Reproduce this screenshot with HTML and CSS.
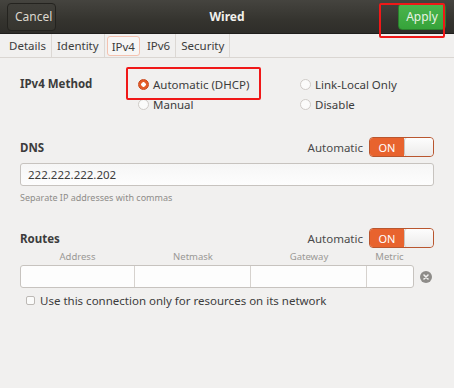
FILE: index.html
```html
<!DOCTYPE html>
<html>
<head>
<meta charset="utf-8">
<link rel="stylesheet" href="styles.css">
</head>
<body>
<div class="win">
  <header class="hb">
    <button class="btn cancel">Cancel</button>
    <div class="title">Wired</div>
    <button class="btn apply">Apply</button>
    <div class="mark mark-apply"></div>
  </header>
  <nav class="tabs">
    <span class="tab">Details</span>
    <span class="tab">Identity</span>
    <span class="tab sel">IPv4</span>
    <span class="tab">IPv6</span>
    <span class="tab">Security</span>
  </nav>
  <main class="content">
    <section class="method">
      <div class="lbl">IPv4 Method</div>
      <div class="radios">
        <label class="radio"><span class="rb on"></span>Automatic (DHCP)</label>
        <label class="radio"><span class="rb"></span>Link-Local Only</label>
        <label class="radio"><span class="rb"></span>Manual</label>
        <label class="radio"><span class="rb"></span>Disable</label>
        <div class="mark mark-dhcp"></div>
      </div>
    </section>

    <section class="sec dns">
      <div class="head">
        <div class="lbl">DNS</div>
        <div class="auto">Automatic</div>
        <div class="switch"><span class="on">ON</span><span class="knob"></span></div>
      </div>
      <div class="entry">222.222.222.202</div>
      <div class="hint">Separate IP addresses with commas</div>
    </section>

    <section class="sec routes">
      <div class="head">
        <div class="lbl">Routes</div>
        <div class="auto">Automatic</div>
        <div class="switch"><span class="on">ON</span><span class="knob"></span></div>
      </div>
      <div class="cols">
        <span class="c1">Address</span><span class="c2">Netmask</span><span class="c3">Gateway</span><span class="c4">Metric</span><span class="c5"></span>
      </div>
      <div class="rowline">
        <div class="fields">
          <span class="f c1"></span><span class="f c2"></span><span class="f c3"></span><span class="f c4"></span>
        </div>
        <span class="clear"><svg width="12" height="12" viewBox="0 0 12 12"><circle cx="6" cy="6" r="6" fill="#8e8c89"/><path d="M4 4L8 8M8 4L4 8" stroke="#f2f1f0" stroke-width="1.6" stroke-linecap="round"/></svg></span>
      </div>
      <label class="check"><span class="cb"></span>Use this connection only for resources on its network</label>
    </section>
  </main>
</div>
</body>
</html>
```
FILE: styles.css
```css
* { box-sizing: border-box; }
html, body { margin: 0; padding: 0; }
body {
  width: 454px;
  height: 388px;
  background: #f1f0ef;
  font-family: "Noto Sans", "Open Sans", sans-serif;
  font-size: 11.5px;
  color: #3c3c3c;
  overflow: hidden;
}
.win { display: flex; flex-direction: column; height: 388px; }

.hb {
  position: relative;
  height: 34px;
  display: flex;
  align-items: center;
  padding: 0 8px 0 7px;
  background: linear-gradient(#45443f, #35342f 60%, #2e2d29);
  border-bottom: 1px solid #1f1e1c;
}
.btn {
  font-family: inherit;
  font-size: 11.5px;
  height: 28px;
  border-radius: 4px;
  padding: 0 7px;
}
.cancel {
  width: 49px;
  color: #dcd8cf;
  background: linear-gradient(#403f3a, #36352f);
  border: 1px solid #24231f;
  font-size: 12px;
}
.title {
  flex: 1;
  text-align: center;
  color: #f1f0ec;
  font-weight: bold;
  font-size: 12px;
}
.apply {
  width: 48px;
  height: 27px;
  color: #e8f3e3;
  background: linear-gradient(#4bb54e, #36a33a);
  border: 1px solid #2a7f2c;
  font-size: 12px;
}
.mark {
  position: absolute;
  border: 2px solid #f01818;
  border-radius: 2px;
  pointer-events: none;
}
.mark-apply { left: 379px; top: 3px; width: 66px; height: 35px; z-index: 2; }

.tabs {
  display: flex;
  height: 24px;
  padding: 0 0 0 4px;
  background: #f1f0ef;
  border-bottom: 1px solid #dad6d2;
  align-items: stretch;
}
.tab {
  display: flex;
  align-items: center;
  padding: 0 5px;
  border-right: 1px solid #dcd8d4;
  color: #3c3c3c;
  font-size: 11.5px;
}
.tab.sel {
  margin: 2px 2px 1px 2px;
  padding: 0 4px;
  border: 1px solid #f4c2b0;
  border-radius: 3px;
  background: #f7f6f5;
}

.content { padding: 0 20px; flex: 1; }
.lbl { font-weight: bold; font-size: 11.5px; color: #3c3c3c; }

.method { display: flex; padding-top: 17px; height: 57px; }
.method .lbl { width: 118px; padding-top: 0; line-height: 18px; }
.radios {
  position: relative;
  display: grid;
  grid-template-columns: 162px auto;
  grid-auto-rows: 20px;
}
.radio { display: flex; align-items: center; gap: 4px; height: 18px; }
.rb {
  width: 11px; height: 11px;
  border-radius: 50%;
  border: 1px solid #cfcbc7;
  background: #fbfbfa;
}
.rb.on {
  border: 1px solid #c9461a;
  background: radial-gradient(circle, #fff 0 2px, #e35c28 2.5px);
}
.mark-dhcp { left: -12px; top: -8px; width: 135px; height: 33px; }

.sec { padding-top: 0; }
.head { display: flex; align-items: center; height: 20px; }
.head .lbl { flex: 1; }
.auto { margin-right: 6px; color: #4a4a4a; }
.switch {
  display: flex;
  width: 65px; height: 20px;
  border: 1px solid #b9562f;
  border-radius: 4px;
  overflow: hidden;
}
.switch .on {
  width: 34px;
  background: #e8632e;
  color: #fff;
  display: flex; align-items: center; justify-content: center;
  font-size: 11px;
}
.switch .knob {
  flex: 1;
  background: linear-gradient(#fdfdfd, #ecebea);
  border-left: 1px solid #c9c5c1;
  border-radius: 3px;
}
.dns { margin-top: 22px; }
.entry {
  margin-top: 6px;
  height: 23px;
  border: 1px solid #c7c3bf;
  border-radius: 3px;
  background: linear-gradient(#f6f6f6, #fdfdfd);
  padding: 0 7px;
  display: flex; align-items: center;
  color: #3c3c3c;
}
.hint { font-size: 9px; color: #8e8c89; margin-top: 5px; }

.routes { margin-top: 24px; }
.cols {
  display: flex;
  height: 17px;
  align-items: flex-end;
  font-size: 9.5px;
  color: #9a9895;
  padding-bottom: 2px;
}
.c1, .c2, .c3 { width: 116px; text-align: center; }
.c1 { width: 115px; }
.c4 { width: 45px; text-align: center; }
.rowline { display: flex; align-items: center; }
.fields {
  display: flex;
  height: 23px;
  border: 1px solid #c7c3bf;
  border-radius: 3px;
  background: #fdfdfd;
  overflow: hidden;
}
.f { border-right: 1px solid #d6d2ce; height: 100%; }
.f.c1 { width: 114px; }
.f.c4 { border-right: 0; width: 46px; }
.clear { display: flex; margin-left: 6px; }
.check {
  display: flex;
  align-items: center;
  gap: 5px;
  margin: 5px 0 0 6px;
  color: #3c3c3c;
}
.cb {
  width: 9px; height: 9px;
  border: 1px solid #bdb9b5;
  border-radius: 2px;
  background: #fbfbfa;
}
```
